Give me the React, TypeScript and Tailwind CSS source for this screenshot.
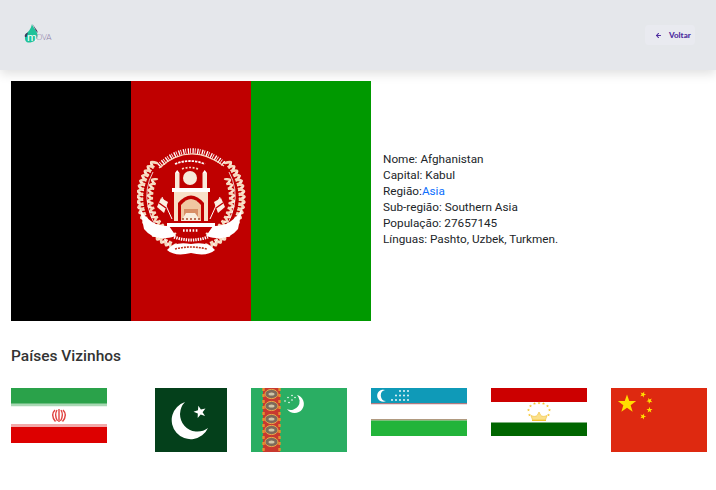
import React from 'react';
import { ArrowLeft } from 'lucide-react';

const star = (cx: number, cy: number, r: number) => {
  const pts: string[] = [];
  for (let i = 0; i < 10; i++) {
    const rad = i % 2 === 0 ? r : r * 0.4;
    const a = (Math.PI / 5) * i - Math.PI / 2;
    pts.push(`${(cx + rad * Math.cos(a)).toFixed(2)},${(cy + rad * Math.sin(a)).toFixed(2)}`);
  }
  return pts.join(' ');
};

// wheat wreath, left side; mirrored for the right one
const Stalk = ({ R, from, to, n, s }: { R: number; from: number; to: number; n: number; s: number }) => {
  const items = [];
  for (let i = 0; i < n; i++) {
    const deg = from + ((to - from) * i) / (n - 1);
    const a = (deg * Math.PI) / 180;
    items.push(
      <g key={i} transform={`translate(${54 + R * Math.cos(a)} ${53 + R * Math.sin(a)}) rotate(${deg})`}>
        <ellipse cx={0} cy={-1.5 * s} rx={2.9 * s} ry={1 * s} fill="#fbe9d6" transform="rotate(30)" />
        <ellipse cx={0} cy={1.5 * s} rx={2.9 * s} ry={1 * s} fill="#f6d9bd" transform="rotate(-30)" />
      </g>,
    );
  }
  return <g>{items}</g>;
};

const Wreath = () => (
  <g>
    <Stalk R={50} from={222} to={112} n={20} s={1.4} />
    <Stalk R={40} from={205} to={118} n={13} s={1.25} />
    <path d="M16 27 Q-2 60 32 100" fill="none" stroke="#fff" strokeWidth="0.8" />
  </g>
);

const AfghanEmblem = () => (
  <svg viewBox="0 0 110 114" className="w-[110px] h-[114px]">
    <Wreath />
    <g transform="translate(108 0) scale(-1 1)">
      <Wreath />
    </g>
    {/* shahada arc, abstract strokes */}
    <path d="M22 21 Q53 -8 87 19" fill="none" stroke="#fff" strokeWidth="5.5" strokeDasharray="1.3 1 .8 1.6" />
    <path d="M22 23 Q53 -4 87 21" fill="none" stroke="#f8dcc2" strokeWidth="1.2" />
    <path d="M38 19 Q53 13 68 19" fill="none" stroke="#fff" strokeWidth="1.8" strokeDasharray="2.4 1" />
    <path d="M45 24 Q53 21 61 24" fill="none" stroke="#f8dcc2" strokeWidth="1.6" strokeDasharray="2 1.6" />
    {/* mosque */}
    <circle cx="53" cy="33" r="7" fill="#f8eadb" />
    <rect x="38" y="28" width="4.5" height="15" fill="#f8eadb" />
    <rect x="65.5" y="28" width="4.5" height="15" fill="#f8eadb" />
    <path d="M38 28 L40.2 25 L42.5 28 Z M65.5 28 L67.7 25 L70 28 Z" fill="#fff" />
    <rect x="35" y="43" width="38" height="4" fill="#fff" />
    <rect x="37" y="47" width="34" height="29" fill="#f7e0c8" />
    <path d="M41 76 V58 Q54 43 67 58 V76 Z" fill="#bf0000" />
    <path d="M44 76 V60 Q54 48 64 60 V76 Z" fill="#f0c7a2" />
    <path d="M47 76 V64 H61 V76 Z" fill="#d98f66" />
    <path d="M44 76 L49 68 L58 68 L64 76 Z" fill="#f9ecdc" />
    <path d="M45 74 H63" stroke="#a8492e" strokeWidth="1.4" strokeDasharray="2 2" />
    <rect x="30" y="78" width="48" height="4" fill="#fff" />
    {/* flags each side */}
    <path d="M35 74 L25 52" stroke="#fff" strokeWidth="1" />
    <path d="M73 74 L83 52" stroke="#fff" strokeWidth="1" />
    <path d="M24 53 L31 57 L27 68 L20 62 Z" fill="#fbf0e2" />
    <path d="M84 53 L77 57 L81 68 L88 62 Z" fill="#fbf0e2" />
    <path d="M22 58 L29 63" stroke="#bf0000" strokeWidth="1.4" />
    <path d="M86 58 L79 63" stroke="#bf0000" strokeWidth="1.4" />
    {/* ribbons */}
    <path d="M3 64 Q14 82 32 81 L39 91 Q18 98 7 84 Z" fill="#fff" />
    <path d="M105 64 Q94 82 76 81 L69 91 Q90 98 101 84 Z" fill="#fff" />
    {/* year and band */}
    <path d="M46 85.5 H62" stroke="#fff" strokeWidth="2.4" strokeDasharray="1.6 1.6" />
    <path d="M37 92 Q54 98 71 92" fill="none" stroke="#fff" strokeWidth="3" strokeDasharray="1.4 1" />
    <path d="M30 105 Q37 96 54 99 Q71 96 78 105 Q70 112 54 108 Q38 112 30 105 Z" fill="#fff" />
    <path d="M38 104 Q54 100 70 104" fill="none" stroke="#c0341f" strokeWidth="1.6" strokeDasharray="2 1" />
  </svg>
);

const Logo = () => (
  <div className="relative w-[28px] h-[19px]">
    <svg viewBox="0 0 15 19" className="w-[15px] h-[19px]">
      <path d="M8 0 C9 4 13 6 13.5 11 C14 16 8 19 4 18.5 C1 18 0 14 2 10 C4 8 7 5 8 0 Z" fill="#1fc29a" />
      <path d="M8.5 0 C10 3 13 5 14 9 L12 7 Z" fill="#3c3a5c" />
      <path d="M1 13 C0 11 2 9 4 8.5 L2.5 13 Z" fill="#3c3a5c" />
    </svg>
    <span className="absolute left-[3px] top-[7px] text-[12px] leading-[11px] text-white font-['Lato',sans-serif]">m</span>
    <span className="absolute left-[12px] top-[9px] text-[8px] leading-[8px] tracking-[-0.4px] text-[#8a7aa5] font-['Lato',sans-serif] font-light">OVA</span>
  </div>
);

const Iran = () => (
  <svg viewBox="0 0 96 55" className="w-[96px] h-[55px]">
    <rect width="96" height="17" fill="#2aa24a" />
    <rect y="15.5" width="96" height="3" fill="#a9d8b4" />
    <rect y="18.5" width="96" height="18" fill="#fff" />
    <rect y="36" width="96" height="3" fill="#f2a9a9" />
    <rect y="39" width="96" height="16" fill="#dd0000" />
    <g fill="none" stroke="#e0423f" strokeWidth="1.4">
      <path d="M48 21 V34" />
      <path d="M46 22 Q43 27 46.5 33" />
      <path d="M50 22 Q53 27 49.5 33" />
      <path d="M44 22 Q39 27 44.5 33.5" />
      <path d="M52 22 Q57 27 51.5 33.5" />
    </g>
  </svg>
);

const Pakistan = () => (
  <svg viewBox="0 0 72 64" className="w-[72px] h-[64px]">
    <rect width="72" height="64" fill="#04401b" />
    <path d="M30 14 A19 19 0 1 0 53 40 A17.4 17.4 0 0 1 30 14 Z" fill="#fff" />
    <polygon points={star(45, 24, 6.5)} fill="#fff" transform="rotate(-15 45 24)" />
  </svg>
);

const Turkmenistan = () => (
  <svg viewBox="0 0 96 64" className="w-[96px] h-[64px]">
    <rect width="96" height="64" fill="#2aae63" />
    <rect x="12" width="17" height="64" fill="#c8392f" />
    <path d="M12.5 0 V64 M28.5 0 V64" stroke="#e6902f" strokeWidth="2.4" strokeDasharray="3 3" />
    {[6, 18, 31, 42, 54].map((cy) => (
      <ellipse key={cy} cx="20.5" cy={cy} rx="6.5" ry="4.6" fill="#7d6a5a" stroke="#e9a84a" strokeWidth="1" />
    ))}
    {[6, 18, 31, 42, 54].map((cy) => (
      <ellipse key={cy} cx="20.5" cy={cy} rx="3" ry="1.6" fill="#cfc6a8" />
    ))}
    <path d="M46 7 A9.2 9.2 0 1 1 36 21 A8.7 8.7 0 0 0 46 7 Z" fill="#fff" />
    {[[41, 7.5], [44, 9.5], [37, 9.5], [41, 12], [34, 13], [38, 14.5]].map(([x, y], i) => (
      <circle key={i} cx={x} cy={y} r="0.8" fill="#fff" />
    ))}
  </svg>
);

const Uzbekistan = () => {
  const dots: [number, number][] = [];
  for (let r = 0; r < 3; r++) {
    for (let c = 0; c < 5; c++) {
      if (r === 0 && c < 2) continue;
      if (r === 1 && c < 1) continue;
      dots.push([21 + c * 4, 3 + r * 4.5]);
    }
  }
  return (
    <svg viewBox="0 0 96 48" className="w-[96px] h-[48px]">
      <rect width="96" height="15" fill="#0f9ab8" />
      <rect y="15" width="96" height="1.5" fill="#b07a80" />
      <rect y="16.5" width="96" height="15" fill="#fff" />
      <rect y="31" width="96" height="1.5" fill="#b09a80" />
      <rect y="32.5" width="96" height="15.5" fill="#22b43a" />
      <path d="M14 2 A6 6 0 1 0 15 13 A5.6 5.6 0 0 1 14 2 Z" fill="#fff" />
      {dots.map(([x, y], i) => (
        <circle key={i} cx={x} cy={y} r="0.9" fill="#fff" />
      ))}
    </svg>
  );
};

const Tajikistan = () => (
  <svg viewBox="0 0 96 48" className="w-[96px] h-[48px]">
    <rect width="96" height="14" fill="#cc0000" />
    <rect y="14" width="96" height="20.5" fill="#fff" />
    <rect y="34.5" width="96" height="13.5" fill="#006600" />
    <path d="M41.5 32 H54.5 L56 27.5 Q51.5 29.5 49.5 27 L48 24 L46.5 27 Q44.5 29.5 40 27.5 Z" fill="#fbe08a" stroke="#f0c030" strokeWidth="0.6" />
    <path d="M41 32.5 H55" stroke="#f4c430" strokeWidth="1" />
    {[[38.5, 27], [37.5, 22], [39.5, 18], [43.5, 15.5], [48, 15], [52.5, 15.5], [56.5, 18], [58.5, 22], [57.5, 27]].map(([x, y], i) => (
      <polygon key={i} points={star(x, y, 1.6)} fill="#f4c430" />
    ))}
  </svg>
);

const China = () => (
  <svg viewBox="0 0 96 64" className="w-[96px] h-[64px]">
    <rect width="96" height="64" fill="#de2910" />
    <polygon points={star(16, 16, 9.6)} fill="#ffde00" />
    <polygon points={star(32, 6.5, 3.2)} fill="#ffde00" transform="rotate(23 32 6.5)" />
    <polygon points={star(38.5, 12.8, 3.2)} fill="#ffde00" transform="rotate(45 38.5 12.8)" />
    <polygon points={star(38.5, 22, 3.2)} fill="#ffde00" />
    <polygon points={star(32, 28.5, 3.2)} fill="#ffde00" transform="rotate(20 32 28.5)" />
  </svg>
);

const Neighbor = ({ children }: { children: React.ReactNode }) => (
  <div className="w-[96px] flex justify-end items-start">{children}</div>
);

export default function App() {
  return (
    <div className="w-[716px] h-[490px] overflow-hidden bg-white text-[#212529] font-['Roboto',sans-serif]">
      {/* Header */}
      <header className="h-[70px] bg-[#e5e7eb] shadow-[0_4px_10px_rgba(0,0,0,0.12)] flex items-center justify-between pl-[24px] pr-[21px]">
        <div className="mb-[3px]">
          <Logo />
        </div>
        <button className="flex items-center w-[50px] h-[20px] pl-[10px] gap-[7px] rounded-[4px] bg-[#e9eaf0] text-[#4c2a9e] text-[8px] font-black font-['Lato',sans-serif]">
          <ArrowLeft size={7} strokeWidth={3.5} className="shrink-0" />
          <span>Voltar</span>
        </button>
      </header>

      {/* Detalhes */}
      <section className="flex items-center mt-[11px] pl-[11px]">
        <div className="w-[360px] h-[240px] flex shrink-0 relative">
          <div className="w-[120px] bg-black" />
          <div className="w-[120px] bg-[#bf0000]" />
          <div className="w-[120px] bg-[#009900]" />
          <div className="absolute left-[126px] top-[64px]">
            <AfghanEmblem />
          </div>
        </div>
        <div className="ml-[12px] mb-[4px] text-[11.75px] leading-[16px]">
          <p>Nome: Afghanistan</p>
          <p>Capital: Kabul</p>
          <p>Região:<a className="text-[#0d6efd]">Asia</a></p>
          <p>Sub-região: Southern Asia</p>
          <p>População: 27657145</p>
          <p>Línguas: Pashto, Uzbek, Turkmen.</p>
        </div>
      </section>

      {/* Vizinhos */}
      <h2 className="mt-[24px] ml-[11px] text-[15.5px] leading-[22px] font-medium text-[#333]">Países Vizinhos</h2>
      <div className="flex gap-[24px] ml-[11px] mt-[21px]">
        <Neighbor><Iran /></Neighbor>
        <Neighbor><Pakistan /></Neighbor>
        <Neighbor><Turkmenistan /></Neighbor>
        <Neighbor><Uzbekistan /></Neighbor>
        <Neighbor><Tajikistan /></Neighbor>
        <Neighbor><China /></Neighbor>
      </div>
    </div>
  );
}
